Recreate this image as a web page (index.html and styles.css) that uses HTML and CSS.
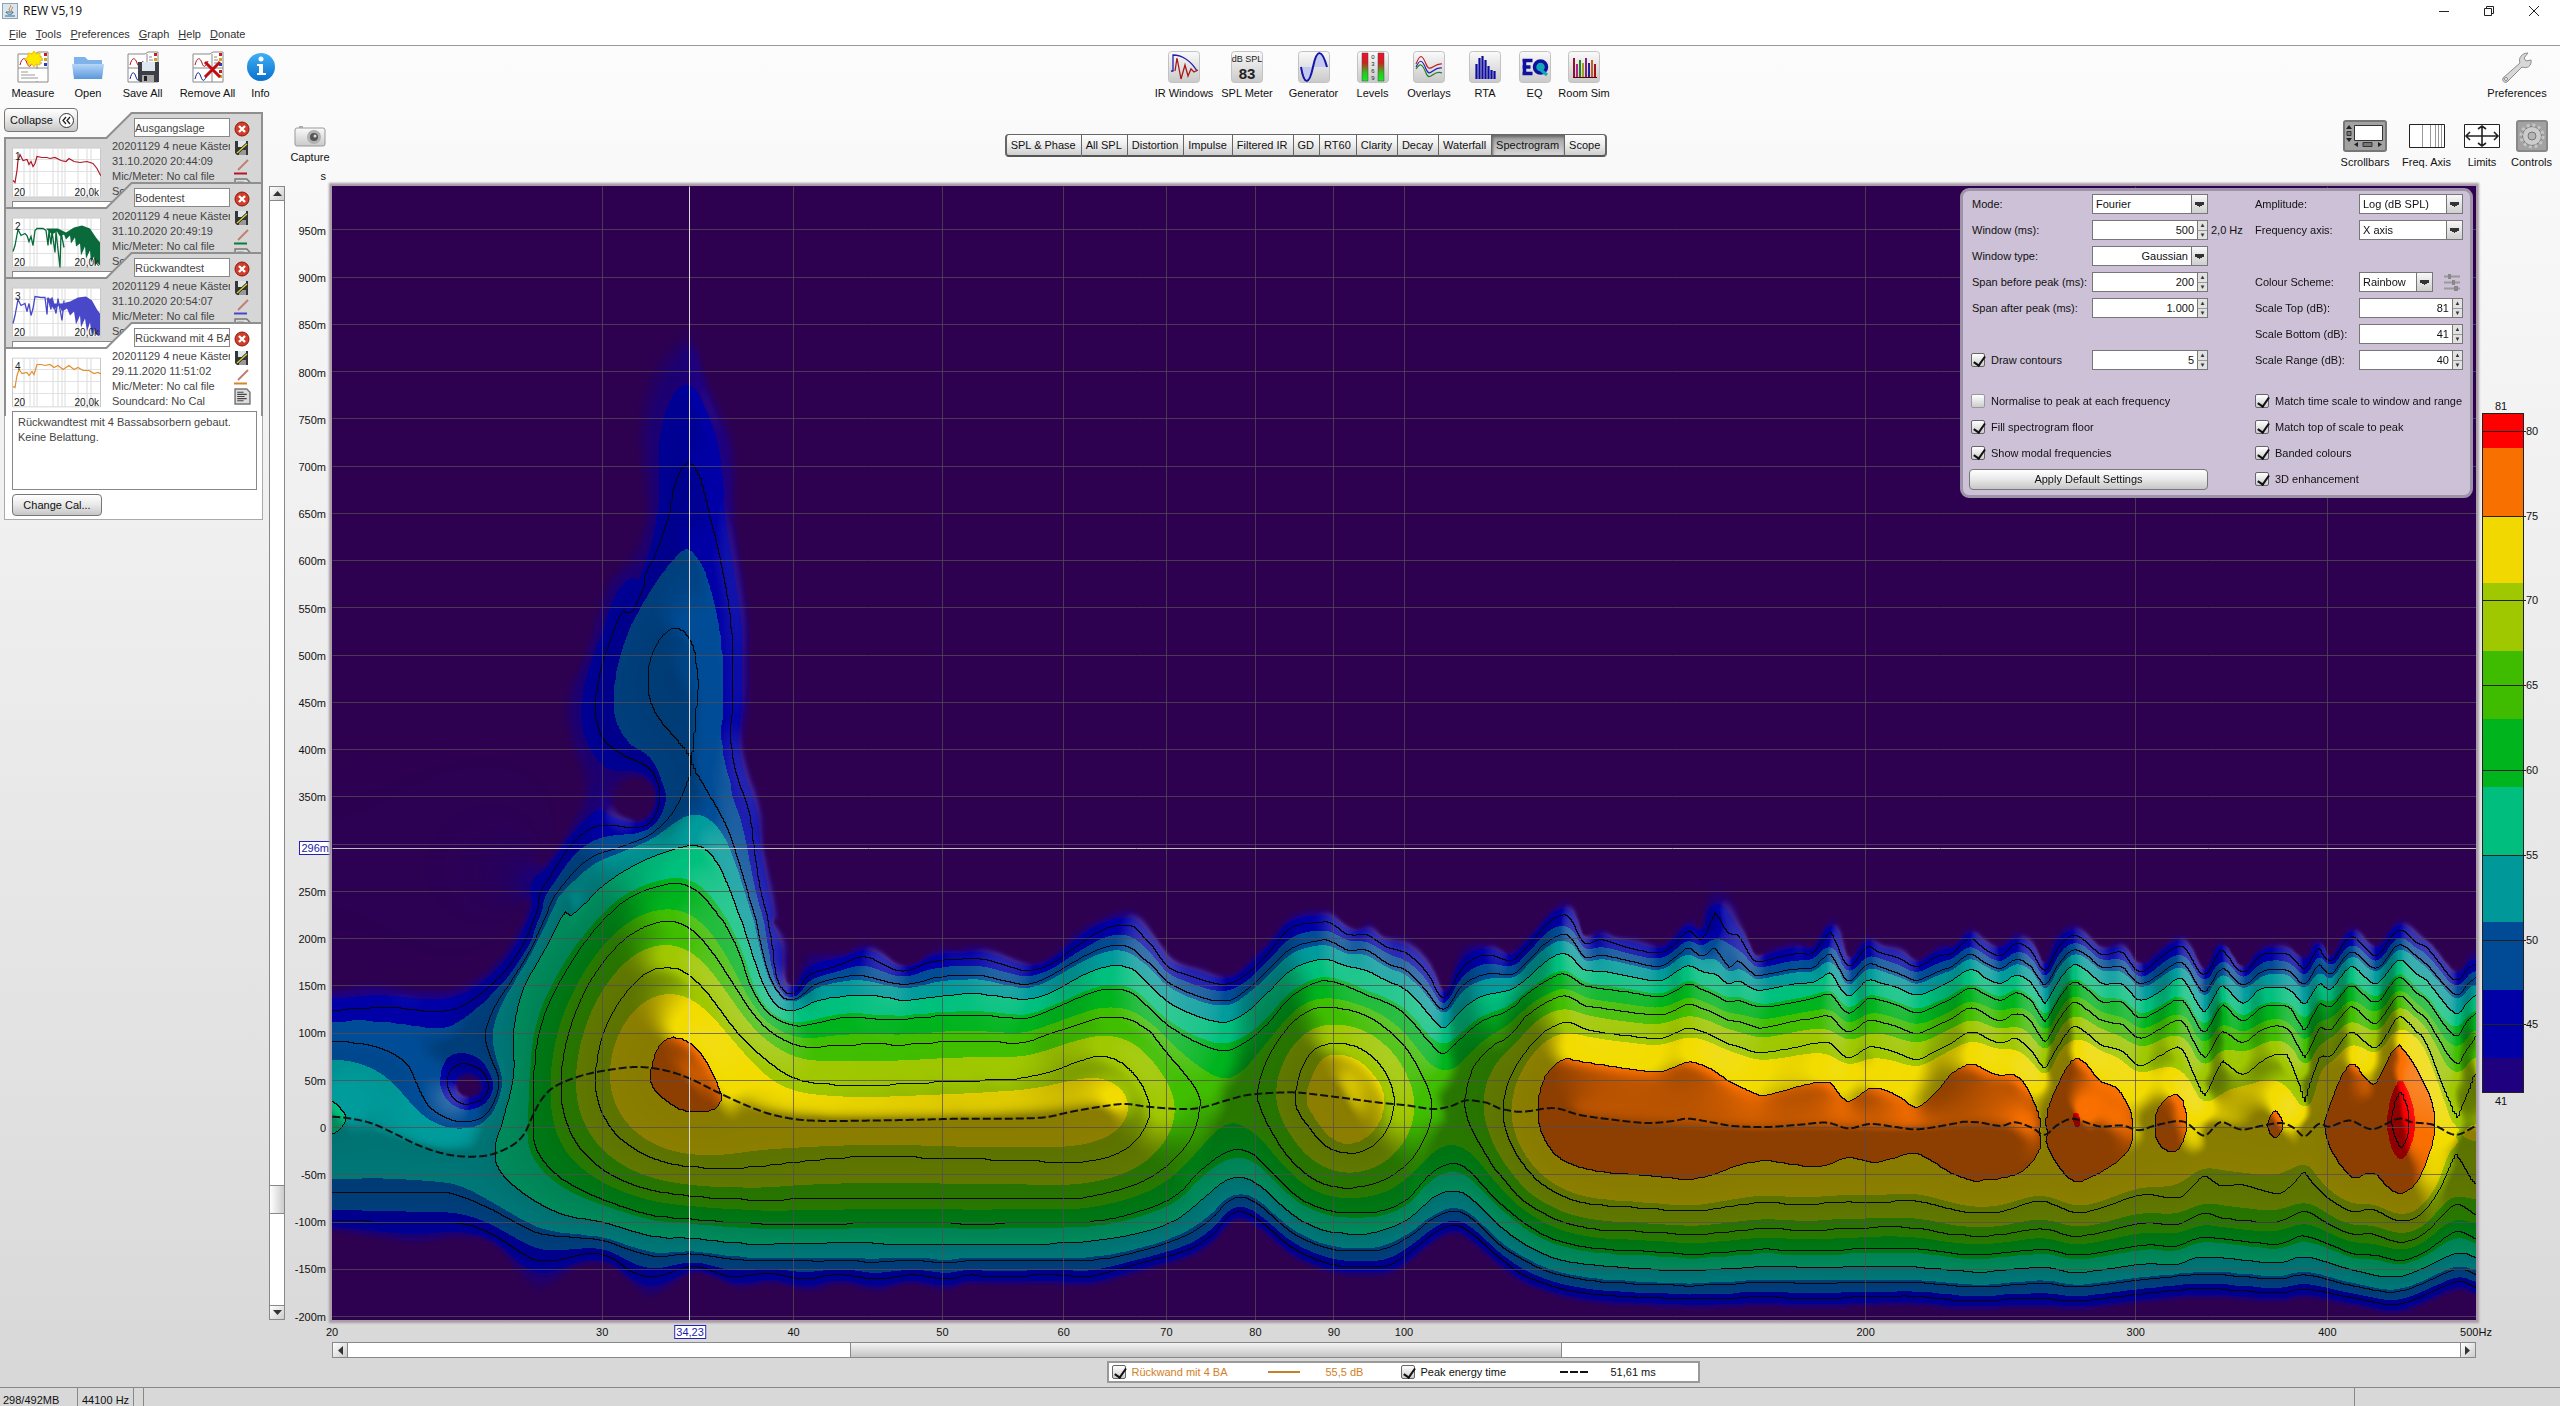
FILE: index.html
```html
<!DOCTYPE html>
<html lang="en">
<head>
<meta charset="utf-8">
<title>REW V5,19</title>
<link rel="stylesheet" href="styles.css">
</head>
<body>
<svg class="defs" width="0" height="0" aria-hidden="true">
  <defs>
    <linearGradient id="g-face" x1="0" y1="0" x2="0" y2="1"><stop offset="0" stop-color="#fafafa"/><stop offset="1" stop-color="#c9c9c9"/></linearGradient>
    <linearGradient id="g-folder" x1="0" y1="0" x2="0" y2="1"><stop offset="0" stop-color="#b6d6f7"/><stop offset="1" stop-color="#5b97dc"/></linearGradient>
    <linearGradient id="g-info" x1="0" y1="0" x2="0" y2="1"><stop offset="0" stop-color="#3fb0f5"/><stop offset="1" stop-color="#0a70cc"/></linearGradient>
    <linearGradient id="g-level" x1="0" y1="0" x2="0" y2="1"><stop offset="0" stop-color="#f01030"/><stop offset=".35" stop-color="#d02020"/><stop offset=".7" stop-color="#30c020"/><stop offset="1" stop-color="#10f020"/></linearGradient>
    <symbol id="i-sheet" viewBox="0 0 32 32">
      <path d="M1 3h17l3-2h10v30H1z" fill="#fff" stroke="#8a8a8a"/>
      <path d="M1 17h30M20 3v28" stroke="#8a8a8a" fill="none"/>
      <path d="M3 14c2-8 5-8 7-2s4 3 6-2" stroke="#b01020" fill="none"/>
      <path d="M27 2h3v3h-3zM27 19h3v3h-3z" fill="#c02020"/><path d="M27 7h3v3h-3zM27 24h3v3h-3z" fill="#d8a020"/><path d="M27 12h3v3h-3z" fill="#2040c0"/>
      <path d="M22 6h3M22 9h4M22 12h3" stroke="#888"/>
    </symbol>
    <symbol id="i-close" viewBox="0 0 16 16"><circle cx="8" cy="8" r="7" fill="#d33c28" stroke="#8a1a12"/><path d="M5 5l6 6M11 5l-6 6" stroke="#fff" stroke-width="2.4"/></symbol>
    <symbol id="i-save" viewBox="0 0 16 16"><path d="M1 1h13v14H3l-2-2z" fill="#33363a"/><path d="M4 1h8v6H4z" fill="#dfe6ea"/><path d="M5 10h7v5H5z" fill="#999"/><path d="M3 13L13 4" stroke="#222" stroke-width="3"/><path d="M3 13L13 4" stroke="#d8cf3a" stroke-width="1.500"/></symbol>
    <symbol id="i-note" viewBox="0 0 16 16"><path d="M1 1h11l3 3v11H1z" fill="#ddd" stroke="#777" stroke-width="1.4"/><path d="M3 4h6M3 6h9M3 8h7M3 10h9M3 12h6" stroke="#444"/></symbol>
    <symbol id="i-thumbgrid" viewBox="0 0 89 50"><path d="M.5.5h88v49H.5z" fill="#fff" stroke="#c8c8c8"/><path d="M1 12h87M1 24h87M1 36h87" stroke="#e2e2e2"/><path d="M12 1v48M18 1v48M22 1v48M25 1v48M41 1v48M46 1v48M50 1v48M53 1v48M66 1v48M75 1v48M79 1v48" stroke="#dcdcdc"/></symbol>
    <symbol id="i-cardbg" viewBox="0 0 258 95" preserveAspectRatio="none"><path d="M1 96V26h101L127 1h130v95z" fill="inherit" stroke="#8f8f8f" stroke-width="2" vector-effect="non-scaling-stroke"/></symbol>
  </defs>
</svg>

<header class="titlebar">
  <svg class="appicon" width="16" height="16" viewBox="0 0 16 16"><rect x=".5" y=".5" width="15" height="15" fill="#d9e6ee" stroke="#8ba3b4"/><path d="M8 2c3 2-3 3 0 6M10 4c2 1-2 2 0 4" stroke="#d8702a" fill="none"/><path d="M4 9h7c0 3-6 3-7 0M3 13h10" stroke="#37688c" fill="none"/></svg>
  <h1>REW V5,19</h1>
  <div class="winbtns">
    <button aria-label="Minimise"><svg width="10" height="10"><path d="M0 5.5h10" stroke="#222"/></svg></button>
    <button aria-label="Restore"><svg width="10" height="10"><path d="M.5 2.5h7v7h-7zM2.500 2.500v-2h7v7h-2" stroke="#222" fill="none"/></svg></button>
    <button aria-label="Close"><svg width="10" height="10"><path d="M0 0l10 10M10 0L0 10" stroke="#222"/></svg></button>
  </div>
</header>
<nav class="menubar">
  <a href="#"><u>F</u>ile</a><a href="#"><u>T</u>ools</a><a href="#"><u>P</u>references</a><a href="#"><u>G</u>raph</a><a href="#"><u>H</u>elp</a><a href="#"><u>D</u>onate</a>
</nav>

<div class="toolbar">
  <div class="group">
    <button class="tool w66"><svg width="32" height="32"><use href="#i-sheet"/><path d="M2 18h28v12H2z" fill="#fff"/><path d="M4 21h7M4 24h14M4 27h17" stroke="#999"/><path d="M17 0l2 3 4-1 0 4 3 2-3 2 0 4-4-1-2 3-2-3-4 1 0-4-3-2 3-2 0-4 4 1z" fill="#ffe800" stroke="#f0c000"/></svg>Measure</button>
    <button class="tool w44"><svg width="32" height="32"><path d="M2 6h11l3 3h14v16H2z" fill="#7fb1ea"/><path d="M0 13h32l-2 15H2z" fill="url(#g-folder)"/></svg>Open</button>
    <button class="tool w65"><svg width="32" height="32"><use href="#i-sheet"/><path d="M3 28c2-8 4-8 6-2s4 3 6-2" stroke="#1020a0" fill="none"/><path d="M11 11h21v20H13l-2-2z" fill="#3c4046"/><path d="M15 11h13v9H15z" fill="#dfe8f2"/><path d="M15 24h12v7H15z" fill="#aaa"/><path d="M17 25h3v5h-3z" fill="#222"/></svg>Save All</button>
    <button class="tool w65"><svg width="32" height="32"><use href="#i-sheet"/><path d="M3 28c2-8 4-8 6-2s4 3 6-2" stroke="#1020a0" fill="none"/><path d="M13 11l15 15M28 11L13 26" stroke="#c00c10" stroke-width="3"/></svg>Remove All</button>
    <button class="tool w41"><svg width="32" height="32"><circle cx="16" cy="16" r="14" fill="url(#g-info)"/><circle cx="16" cy="8" r="2.500" fill="#fff"/><path d="M12 13h6v9h3v2H12v-2h2v-7h-2z" fill="#fff"/></svg>Info</button>
  </div>
  <div class="group">
    <button class="tool w62"><svg width="32" height="32"><rect class="face" x=".5" y=".5" width="31" height="31" rx="3"/><path d="M3 20h2V4c9 0 18 6 24 16" stroke="#2020b0" stroke-width="1.300" fill="none"/><path d="M7 20l2-13 4 21 4-14 3 11 3-7 3 3 4-2" stroke="#a81818" stroke-width="1.300" fill="none"/></svg>IR Windows</button>
    <button class="tool w64"><svg width="32" height="32"><rect class="face" x=".5" y=".5" width="31" height="31" rx="3"/><text x="16" y="11" class="t-small">dB SPL</text><text x="16" y="28" class="t-big">83</text></svg>SPL Meter</button>
    <button class="tool w69"><svg width="32" height="32"><rect class="face" x=".5" y=".5" width="31" height="31" rx="3"/><path d="M3 16h11c-3 18-8 18-11 0M14 16c4-18 9-18 15 0z" fill="#c3c8ee"/><path d="M3 16c3 18 8 19 12 0s9-18 14 0" stroke="#1414a8" stroke-width="2" fill="none"/></svg>Generator</button>
    <button class="tool w49"><svg width="32" height="32"><rect class="face" x=".5" y=".5" width="31" height="31" rx="3"/><path d="M5 2h6v28H5zM21 2h6v28h-6z" fill="url(#g-level)" stroke="#444" stroke-width=".5"/><text x="16" y="8" class="t-tiny">0</text><text x="16" y="15" class="t-tiny">3</text><text x="16" y="22" class="t-tiny">6</text><text x="16" y="29" class="t-tiny">9</text></svg>Levels</button>
    <button class="tool w64"><svg width="32" height="32"><rect class="face" x=".5" y=".5" width="31" height="31" rx="3"/><g fill="none" stroke-width="1.200"><path d="M3 13c4-10 6-10 10 0s7-1 16 0" stroke="#c02020"/><path d="M3 16c4-8 6-8 10 2s7-3 16-1" stroke="#2020c0"/><path d="M3 18c4-6 6-6 10 4s7-4 16 0" stroke="#208020"/></g></svg>Overlays</button>
    <button class="tool w48"><svg width="32" height="32"><rect class="face" x=".5" y=".5" width="31" height="31" rx="3"/><path d="M7.500 28V13M10.500 28V7M13.500 28V5M16.500 28V9M19.500 28V15M22.500 28v-9M25.500 28v-8" stroke="#0c0ca0" stroke-width="2.200"/></svg>RTA</button>
    <button class="tool w51"><svg width="32" height="32"><rect class="face" x=".5" y=".5" width="31" height="31" rx="3"/><path d="M3.500 9.500h10M3.500 16h8M3.500 22.500h10M5.500 8v16" stroke="#1010a0" stroke-width="3.500" fill="none"/><circle cx="21.500" cy="16" r="6" fill="#10a8b8" stroke="#1010a0" stroke-width="3.500"/><path d="M22 19l6 5" stroke="#10a8b8" stroke-width="3" fill="none"/></svg>EQ</button>
    <button class="tool w48"><svg width="32" height="32"><rect class="face" x=".5" y=".5" width="31" height="31" rx="3"/><g stroke-width="2"><path d="M6 26V7" stroke="#901030"/><path d="M9 26V13" stroke="#b02090"/><path d="M12 26V9" stroke="#208020"/><path d="M15 26V12" stroke="#a0a020"/><path d="M18 26V7" stroke="#802080"/><path d="M21 26V12" stroke="#2020a0"/><path d="M24 26V9" stroke="#c06020"/><path d="M27 26V13" stroke="#a01020"/></g><path d="M5 26.500h24" stroke="#600"/></svg>Room Sim</button>
  </div>
  <div class="group prefs">
    <button class="tool"><svg width="32" height="32"><path d="M2 27L19 12c-2-5 2-10 8-10l-4 5 2 3 5-1c1 6-4 9-9 7L6 31c-3 1-5-1-4-4z" fill="#d8d8d8" stroke="#8c8c8c"/><circle cx="5" cy="28" r="1.500" fill="#fff" stroke="#888"/></svg>Preferences</button>
  </div>
</div>

<div class="work">
  <aside class="sidebar">
    <button class="btn collapse">Collapse <svg width="17" height="17"><circle cx="8.500" cy="8.500" r="7" fill="#fff" stroke="#333"/><path d="M8 5L5 8.500 8 12M12 5L9 8.500l3 3.500" stroke="#222" fill="none" stroke-width="1.300"/></svg></button>
    <div class="cards">
      <article class="card">
        <svg class="cardbg"><use href="#i-cardbg"/></svg>
        <svg class="thumb" width="89" height="51" viewBox="0 0 89 50"><use href="#i-thumbgrid"/><path d="M1 33l2 2 2-12 1-10 2-6 3 6 4-1 2 5 2-3 2 5 2-3 2-7 5 1 5 0 3 1 5-1 6 3 5 1 3-3 5 3 6 1 7-1 6 2 4 5 3 6 2 2 2-4 1-4" stroke="#b01828" stroke-width="1.200" fill="none"/><text x="3" y="12">1</text><text x="2" y="48">20</text><text x="87" y="48" class="end">20,0k</text></svg>
        <div class="info"><input type="text" value="Ausgangslage" aria-label="Measurement name"><p>20201129 4 neue Kästen</p><p>31.10.2020 20:44:09</p><p>Mic/Meter: No cal file</p><p>Soundcard: No Cal</p></div>
        <div class="acts"><button aria-label="Remove"><svg width="16" height="16"><use href="#i-close"/></svg></button><button aria-label="Save"><svg width="16" height="16"><use href="#i-save"/></svg></button><button aria-label="Trace colour"><svg width="16" height="16"><path d="M4 11L14 1" stroke="#c08070" stroke-width="2"/><path d="M0 14.500h13" stroke="#b01828" stroke-width="2"/></svg></button><button aria-label="Notes"><svg width="17" height="17"><use href="#i-note"/></svg></button></div>
        <textarea aria-label="Notes"></textarea>
      </article>
      <article class="card">
        <svg class="cardbg"><use href="#i-cardbg"/></svg>
        <svg class="thumb" width="89" height="51" viewBox="0 0 89 50"><use href="#i-thumbgrid"/><path d="M1 34l2-6 3-16 3 6 4-2 2 2 2 6 2-5 2 9 2-15 2-2 6 0 3 2 2 15 1-15 2 14 1-13 3 21 1-21 4 36 1-35 3 15" stroke="#0a6a3c" stroke-width="1.300" fill="none"/><path d="M34 11h12l8 4 8-5 8-2 8 3 6 9 4 5v23l-3-3-2 3-1-9-3 6-1-12-4 8-1-12-4 9-1-12-4 3-1-9-4 6-1-8-4 4-2-5-4 2-3-5-5 3z" fill="#0a6a3c"/><text x="3" y="12">2</text><text x="2" y="48">20</text><text x="87" y="48" class="end">20,0k</text></svg>
        <div class="info"><input type="text" value="Bodentest" aria-label="Measurement name"><p>20201129 4 neue Kästen</p><p>31.10.2020 20:49:19</p><p>Mic/Meter: No cal file</p><p>Soundcard: No Cal</p></div>
        <div class="acts"><button aria-label="Remove"><svg width="16" height="16"><use href="#i-close"/></svg></button><button aria-label="Save"><svg width="16" height="16"><use href="#i-save"/></svg></button><button aria-label="Trace colour"><svg width="16" height="16"><path d="M4 11L14 1" stroke="#c08070" stroke-width="2"/><path d="M0 14.500h13" stroke="#0a7a44" stroke-width="2"/></svg></button><button aria-label="Notes"><svg width="17" height="17"><use href="#i-note"/></svg></button></div>
        <textarea aria-label="Notes"></textarea>
      </article>
      <article class="card">
        <svg class="cardbg"><use href="#i-cardbg"/></svg>
        <svg class="thumb" width="89" height="51" viewBox="0 0 89 50"><use href="#i-thumbgrid"/><path d="M1 36l2-8 3-16 3 6 4-2 2 8 2-8 2 12 2-7 2-12 6 1 4 0 2 17 1-17 3 12 1-12 4 16 2-15 4 22 2-20" stroke="#4848c8" stroke-width="1.300" fill="none"/><path d="M34 11h6l2 5 8 0 8-2 8-4 8-1 6 4 5 9 3 4v22l-4-1-2-6-2 8-2-14-3 9-2-13-4 9-1-12-4 9-2-13-4 4-3-7-5 3-3-6-5 4z" fill="#4848c8"/><text x="3" y="12">3</text><text x="2" y="48">20</text><text x="87" y="48" class="end">20,0k</text></svg>
        <div class="info"><input type="text" value="Rückwandtest" aria-label="Measurement name"><p>20201129 4 neue Kästen</p><p>31.10.2020 20:54:07</p><p>Mic/Meter: No cal file</p><p>Soundcard: No Cal</p></div>
        <div class="acts"><button aria-label="Remove"><svg width="16" height="16"><use href="#i-close"/></svg></button><button aria-label="Save"><svg width="16" height="16"><use href="#i-save"/></svg></button><button aria-label="Trace colour"><svg width="16" height="16"><path d="M4 11L14 1" stroke="#c08070" stroke-width="2"/><path d="M0 14.500h13" stroke="#4848c8" stroke-width="2"/></svg></button><button aria-label="Notes"><svg width="17" height="17"><use href="#i-note"/></svg></button></div>
        <textarea aria-label="Notes"></textarea>
      </article>
      <article class="card current">
        <svg class="cardbg"><use href="#i-cardbg"/></svg>
        <svg class="thumb" width="89" height="51" viewBox="0 0 89 50"><use href="#i-thumbgrid"/><path d="M1 29l2 1 2-12 2-6 3 4 5-1 2 3 3-4 2 3 3-10 4 0 4 1 5-1 4 3 4-2 5 4 6-4 5 4 4-2 5 3 6 0 5 3 4-1 4 2 3 4 2 2" stroke="#e09030" stroke-width="1.200" fill="none"/><text x="3" y="12">4</text><text x="2" y="48">20</text><text x="87" y="48" class="end">20,0k</text></svg>
        <div class="info"><input type="text" value="Rückwand mit 4 BA" aria-label="Measurement name"><p>20201129 4 neue Kästen</p><p>29.11.2020 11:51:02</p><p>Mic/Meter: No cal file</p><p>Soundcard: No Cal</p></div>
        <div class="acts"><button aria-label="Remove"><svg width="16" height="16"><use href="#i-close"/></svg></button><button aria-label="Save"><svg width="16" height="16"><use href="#i-save"/></svg></button><button aria-label="Trace colour"><svg width="16" height="16"><path d="M4 11L14 1" stroke="#c08070" stroke-width="2"/><path d="M0 14.500h13" stroke="#d08828" stroke-width="2"/></svg></button><button aria-label="Notes"><svg width="17" height="17"><use href="#i-note"/></svg></button></div>
        <textarea aria-label="Notes">Rückwandtest mit 4 Bassabsorbern gebaut.
Keine Belattung.</textarea>
        <button class="btn cal">Change Cal...</button>
      </article>
    </div>
  </aside>

  <main class="graph">
    <div class="graphhead">
      <button class="tool capture"><svg width="32" height="24"><rect x="1" y="4" width="30" height="18" rx="2" fill="url(#g-face)" stroke="#999"/><path d="M5 2h4v2H5z" fill="#aaa"/><circle cx="20" cy="13" r="7" fill="#b0b0b0"/><circle cx="20" cy="13" r="4" fill="#555"/><circle cx="21" cy="12" r="1.500" fill="#ddd"/></svg>Capture</button>
      <div class="tabs" role="tablist">
        <button>SPL &amp; Phase</button><button>All SPL</button><button>Distortion</button><button>Impulse</button><button>Filtered IR</button><button>GD</button><button>RT60</button><button>Clarity</button><button>Decay</button><button>Waterfall</button><button class="on">Spectrogram</button><button>Scope</button>
      </div>
      <div class="group views">
        <button class="tool w58"><svg width="44" height="32"><rect x="1" y="1" width="42" height="30" rx="2" fill="#a2a2a2" stroke="#777" stroke-width="2"/><path d="M11.500 5.500h28v15h-28z" fill="#fff" stroke="#333"/><path d="M3 9l3-4 3 4zM3 18l3 4 3-4zM15 22v5l-4-2.500zM35 22v5l4-2.500z" fill="#222"/><path d="M4 11.500h4v4H4zM20 22.500h9v4h-9z" fill="#777" stroke="#333"/></svg>Scrollbars</button>
        <button class="tool w65"><svg width="36" height="32"><path d="M.5 4.500h35v23H.5z" fill="#fff" stroke="#222"/><path d="M13.500 5v22M21.500 5v22M26.500 5v22M29.500 5v22M32.500 5v22" stroke="#999"/></svg>Freq. Axis</button>
        <button class="tool w46"><svg width="36" height="32"><path d="M.5 4.500h35v23H.5z" fill="#fff" stroke="#222"/><path d="M2 16h32M18 6v20M6 12l-4 4 4 4M30 12l4 4-4 4M14 9l4-3 4 3M14 23l4 3 4-3" stroke="#222" stroke-width="1.600" fill="none"/></svg>Limits</button>
        <button class="tool w53"><svg width="32" height="32"><rect x="1" y="1" width="30" height="30" rx="2" fill="#a2a2a2" stroke="#888" stroke-width="2"/><circle cx="16" cy="16" r="9.500" fill="#ccc" stroke="#777"/><circle cx="16" cy="16" r="11" fill="none" stroke="#c4c4c4" stroke-width="3" stroke-dasharray="3 2.760"/><circle cx="16" cy="16" r="4" fill="#b4b4b4" stroke="#777"/></svg>Controls</button>
      </div>
    </div>
    <span class="unit">s</span>

    <div class="scroll vert" role="scrollbar" aria-controls="spectrogram" aria-valuenow="12" aria-label="Time">
      <button aria-label="Up"><svg width="9" height="5"><path d="M0 5l4.500-5L9 5z" fill="#333"/></svg></button><i class="gap-a"></i><i class="thumbbar"></i><i class="gap-b"></i><button aria-label="Down"><svg width="9" height="5"><path d="M0 0l4.500 5L9 0z" fill="#333"/></svg></button>
    </div>
    <div class="ylabels"><span>950m</span><span>900m</span><span>850m</span><span>800m</span><span>750m</span><span>700m</span><span>650m</span><span>600m</span><span>550m</span><span>500m</span><span>450m</span><span>400m</span><span>350m</span><span class="under">&nbsp;<span class="cursor-y">296m</span></span><span>250m</span><span>200m</span><span>150m</span><span>100m</span><span>50m</span><span>0</span><span>-50m</span><span>-100m</span><span>-150m</span><span>-200m</span></div>

    <section class="plot">
      <canvas id="spectrogram" width="2144" height="1134"></canvas>
      <form class="panel">
        <div class="col a">
          <div class="row"><label for="mode">Mode:</label><select id="mode"><option>Fourier</option></select></div>
          <div class="row"><label for="win">Window (ms):</label><span class="spin"><input id="win" type="text" value="500"><button type="button" aria-label="More">▲</button><button type="button" aria-label="Less">▼</button></span><span class="hz">2,0 Hz</span></div>
          <div class="row"><label for="wtype">Window type:</label><select id="wtype" class="r"><option>Gaussian</option></select></div>
          <div class="row"><label for="before">Span before peak (ms):</label><span class="spin"><input id="before" type="text" value="200"><button type="button" aria-label="More">▲</button><button type="button" aria-label="Less">▼</button></span></div>
          <div class="row"><label for="after">Span after peak (ms):</label><span class="spin"><input id="after" type="text" value="1.000"><button type="button" aria-label="More">▲</button><button type="button" aria-label="Less">▼</button></span></div>
          <div class="row"></div>
          <div class="row"><label class="ck"><input type="checkbox" checked>Draw contours</label><span class="spin"><input aria-label="Contour step" type="text" value="5"><button type="button" aria-label="More">▲</button><button type="button" aria-label="Less">▼</button></span></div>
          <div class="row top"><label class="ck"><input type="checkbox">Normalise to peak at each frequency</label></div>
          <div class="row"><label class="ck"><input type="checkbox" checked>Fill spectrogram floor</label></div>
          <div class="row"><label class="ck"><input type="checkbox" checked>Show modal frequencies</label></div>
          <div class="row"><button type="button" class="btn apply">Apply Default Settings</button></div>
        </div>
        <div class="col b">
          <div class="row"><label for="amp">Amplitude:</label><select id="amp"><option>Log (dB SPL)</option></select></div>
          <div class="row"><label for="fax">Frequency axis:</label><select id="fax"><option>X axis</option></select></div>
          <div class="row"></div>
          <div class="row"><label for="scheme">Colour Scheme:</label><select id="scheme" class="short"><option>Rainbow</option></select><svg class="sliders" width="16" height="18"><path d="M0 3.500h16M0 9.500h16M0 15.500h16" stroke="#999" stroke-width="2"/><path d="M4 1h3v5H4zM8 7h3v5H8zM10 13h4v5h-4z" fill="#888"/></svg></div>
          <div class="row"><label for="top">Scale Top (dB):</label><span class="spin"><input id="top" type="text" value="81"><button type="button" aria-label="More">▲</button><button type="button" aria-label="Less">▼</button></span></div>
          <div class="row"><label for="bot">Scale Bottom (dB):</label><span class="spin"><input id="bot" type="text" value="41"><button type="button" aria-label="More">▲</button><button type="button" aria-label="Less">▼</button></span></div>
          <div class="row"><label for="rng">Scale Range (dB):</label><span class="spin"><input id="rng" type="text" value="40"><button type="button" aria-label="More">▲</button><button type="button" aria-label="Less">▼</button></span></div>
          <div class="row top"><label class="ck"><input type="checkbox" checked>Match time scale to window and range</label></div>
          <div class="row"><label class="ck"><input type="checkbox" checked>Match top of scale to peak</label></div>
          <div class="row"><label class="ck"><input type="checkbox" checked>Banded colours</label></div>
          <div class="row"><label class="ck"><input type="checkbox" checked>3D enhancement</label></div>
        </div>
      </form>
    </section>

    <div class="scale">
      <div class="bar"><b>81</b>
        <span style="top:2.5%">80</span><span style="top:15%">75</span><span style="top:27.5%">70</span><span style="top:40%">65</span><span style="top:52.5%">60</span><span style="top:65%">55</span><span style="top:77.5%">50</span><span style="top:90%">45</span>
        <b class="min">41</b></div>
    </div>

    <div class="xlabels">
      <span style="left:0%">20</span><span style="left:12.6%">30</span><span class="cursor-x" style="left:16.7%">34,23</span><span style="left:21.53%">40</span><span style="left:28.47%">50</span><span style="left:34.13%">60</span><span style="left:38.92%">70</span><span style="left:43.07%">80</span><span style="left:46.73%">90</span><span style="left:50%">100</span><span style="left:71.53%">200</span><span style="left:84.13%">300</span><span style="left:93.07%">400</span><span style="left:100%">500Hz</span>
    </div>
    <div class="scroll horiz" role="scrollbar" aria-controls="spectrogram" aria-valuenow="30" aria-label="Frequency">
      <button aria-label="Left"><svg width="5" height="9"><path d="M5 0L0 4.500 5 9z" fill="#333"/></svg></button><i class="gap-a"></i><i class="thumbbar"></i><i class="gap-b"></i><button aria-label="Right"><svg width="5" height="9"><path d="M0 0l5 4.500L0 9z" fill="#333"/></svg></button>
    </div>
    <div class="legend">
      <label class="ck orange"><input type="checkbox" checked>Rückwand mit 4 BA</label><i class="line"></i><span class="orange val">55,5 dB</span>
      <label class="ck second"><input type="checkbox" checked>Peak energy time</label><i class="line dash"></i><span>51,61 ms</span>
    </div>
  </main>
</div>
<footer class="status"><span class="mem">298/492MB</span><span class="rate">44100 Hz</span><span class="blank"></span><span class="fill"></span><span class="last"></span></footer>
<script src="script.js"></script>
</body>
</html>
```
FILE: styles.css
```css
* { box-sizing: border-box; }
body {
  margin: 0;
  min-height: 100vh;
  display: flex;
  flex-direction: column;
  font: 11px/14px "Liberation Sans", Arial, sans-serif;
  color: #111;
  background: linear-gradient(#fff 0, #fcfcfc 46px, #fafafa 130px, #e2e2e2 75%, #d7d7d7 100%);
}
button, input, select, textarea { font: inherit; color: inherit; margin: 0; }
button { background: none; border: 0; padding: 0; white-space: nowrap; }
p, h1 { margin: 0; }
svg { display: block; flex: none; }
.defs { position: absolute; }

.titlebar { display: flex; align-items: center; height: 22px; padding-left: 2px; background: #fff; }
.titlebar h1 { flex: 1; margin-left: 5px; font: 12px/16px "Open Sans", "Noto Sans", sans-serif; }
.winbtns { display: flex; margin-right: 4px; }
.winbtns button { width: 45px; height: 20px; display: flex; align-items: center; justify-content: center; }
.menubar { display: flex; gap: 9px; height: 24px; padding: 5px 9px; background: #fff; border-bottom: 1px solid #999; }
.menubar a { color: #333; text-decoration: none; }

.toolbar { display: flex; justify-content: space-between; height: 60px; padding-top: 5px; }
.group { display: flex; }
.prefs { width: 80px; justify-content: center; padding-right: 6px; }
.tool { display: flex; flex-direction: column; align-items: center; gap: 3px; align-self: flex-start; }
.w41 { width: 41px; } .w44 { width: 44px; } .w46 { width: 46px; } .w48 { width: 48px; }
.w49 { width: 49px; } .w51 { width: 51px; } .w53 { width: 53px; } .w58 { width: 58px; }
.w62 { width: 62px; } .w64 { width: 64px; } .w65 { width: 65px; } .w66 { width: 66px; } .w69 { width: 69px; }
.face { fill: url(#g-face); stroke: #c2c2c2; }
.tool text { text-anchor: middle; fill: #222; }
.t-small { font-size: 9px; }
.t-big { font-size: 15px; font-weight: bold; }
.t-tiny { font-size: 6px; }

.btn { border: 1px solid #777; border-radius: 4px; background: linear-gradient(#fff, #e8e8e8 50%, #c6c6c6); color: #111; }

.work { flex: 1; display: grid; grid-template-columns: 264px 1fr; }
.sidebar { padding: 2px 0 0 4px; }
.collapse { display: flex; align-items: center; gap: 5px; width: 74px; height: 24px; padding-left: 5px; }
.cards { width: 259px; margin-top: -20px; }
.card {
  position: relative;
  display: grid;
  grid-template-columns: 100px 1fr 33px;
  grid-template-rows: 88px 1fr;
  height: 95px;
  margin-bottom: -25px;
  padding: 1px 0 0 8px;
  overflow: hidden;
  fill: #d6d6d6;
  color: #444;
  pointer-events: none;
}
.card.current { height: auto; grid-template-rows: 88px 80px 29px; fill: #fff; margin-bottom: 0; }
.cardbg { position: absolute; inset: 0; width: 100%; height: 95px; }
.card > :not(.cardbg) { position: relative; pointer-events: auto; }
.card.current::after { content: ""; position: absolute; inset: 94px 0 0 0; border: 1px solid #aaa; border-top: 0; background: #fff; }
.card.current > textarea, .card.current > .cal { z-index: 1; }
.thumb { margin-top: 34px; }
.thumb text { font-size: 10px; fill: #222; }
.thumb .end { text-anchor: end; }
.info { padding-top: 5px; }
.info input { display: block; width: 96px; height: 19px; margin: 0 0 2px 22px; padding: 0; border: 1px solid #888; background: #fff; }
.info p { height: 15px; width: 118px; overflow: hidden; white-space: nowrap; }
.acts { display: flex; flex-direction: column; align-items: flex-start; gap: 3px; padding: 8px 0 0 4px; }
.card textarea { grid-column: 1 / 4; margin: 0 6px 0 0; height: 79px; border: 1px solid #888; resize: none; overflow: hidden; padding: 3px 5px; line-height: 15px; background: #fff; }
.cal { grid-column: 1 / 4; width: 90px; height: 22px; margin-top: 3px; }

.graph {
  display: grid;
  grid-template-columns: 22px 46px 1fr 84px;
  grid-template-rows: 65px 15px 1fr 22px 16px 29px;
}
.graphhead { grid-column: 1 / 5; display: flex; align-items: flex-start; padding-top: 14px; }
.capture { width: 48px; margin-left: 22px; padding-top: 4px; gap: 2px; }
.tabs { flex: 1; display: flex; justify-content: center; padding: 14px 58px 0 0; }
.tabs button {
  height: 23px; padding: 0 5px 0 4px;
  border: 1px solid #666; border-left: 0; border-bottom: 2px solid #555;
  background: linear-gradient(#fff, #efefef 45%, #cfcfcf);
}
.tabs button:first-child { border-left: 2px solid #666; border-radius: 4px 0 0 4px; }
.tabs button:last-child { border-right: 2px solid #666; border-radius: 0 4px 4px 0; }
.tabs .on { background: linear-gradient(#969696, #b4b4b4 40%, #d8d8d8); box-shadow: inset 1px 2px 3px #666; }
.views { margin-right: 2px; }
.unit { grid-column: 2; grid-row: 2; text-align: right; padding-right: 6px; margin-top: -2px; }

.scroll { display: flex; border: 1px solid #888; background: #fff; }
.scroll button { flex: none; display: flex; align-items: center; justify-content: center; background: linear-gradient(135deg, #fff, #ccc); }
.scroll i { display: block; }
.vert { grid-column: 1; grid-row: 3; width: 16px; margin-left: 5px; flex-direction: column; }
.vert button { height: 14px; border-bottom: 1px solid #888; }
.vert button:last-child { border-bottom: 0; border-top: 1px solid #888; }
.vert .gap-a { flex: 985; } .vert .gap-b { flex: 91; }
.vert .thumbbar { height: 29px; border: 1px solid #888; border-width: 1px 0; background: linear-gradient(90deg, #fff, #ccc); }
.horiz { grid-column: 3; grid-row: 5; }
.horiz button { width: 15px; border-right: 1px solid #888; }
.horiz button:last-child { border-right: 0; border-left: 1px solid #888; }
.horiz .gap-a { flex: 503; } .horiz .gap-b { flex: 899; }
.horiz .thumbbar { flex: 711; border: 1px solid #888; border-width: 0 1px; background: linear-gradient(#f4f4f4, #c4c4c4); }

.ylabels { grid-column: 2; grid-row: 3; display: flex; flex-direction: column; justify-content: space-between; align-items: flex-end; padding: 38px 6px 0 0; margin-bottom: -4px; }
.cursor-y, .cursor-x { color: #22a; border: 1px solid #22a; background: #fff; line-height: 12px; padding: 0 1px; }
.under { position: relative; }
.cursor-y { position: absolute; right: -5px; top: 3px; }
.xlabels { grid-column: 3; grid-row: 4; position: relative; }
.xlabels span { position: absolute; top: 5px; transform: translateX(-50%); }

.plot { grid-column: 3; grid-row: 3; position: relative; background: #2d0050; box-shadow: 0 0 2px 3px #a89ca6; }
.plot canvas { position: absolute; inset: 0; width: 100%; height: 100%; }
.panel {
  position: absolute; top: 2px; right: 3px; width: 513px; height: 310px;
  display: flex; gap: 5px; padding: 0 7px;
  border: 3px solid #9d94a8; border-radius: 9px; background: #cdc1d8;
}
.col.a { width: 280px; }
.col.b { width: 208px; }
.row { display: flex; align-items: center; height: 26px; white-space: nowrap; }
.row.top { margin-top: 15px; }
.row > label { flex: 1; }
.a .row > label { flex: none; width: 122px; padding-left: 2px; }
.a .row > .ck { padding-left: 1px; }
.panel select, .spin { height: 20px; border: 1px solid #777; background: #fff; border-radius: 0; }
.panel select {
  appearance: none; width: 116px; padding: 0 16px 0 3px;
  background:
    conic-gradient(from -60deg at 50% 100%, #333 120deg, #0000 0) right 3px top 7px / 9px 5px no-repeat,
    linear-gradient(#777, #777) right 15px top 0 / 1px 100% no-repeat,
    linear-gradient(#f8f8f8, #cfcfcf) right 0 top 0 / 15px 100% no-repeat,
    #fff;
}
.panel select.r { text-align: right; text-align-last: right; padding-right: 19px; }
.b select, .b .spin { width: 104px; }
.b select.short { width: 74px; }
.sliders { margin: 0 3px 0 11px; }
.spin { display: grid; grid-template: 9px 9px / 1fr 10px; width: 116px; }
.spin input { grid-row: 1 / 3; min-width: 0; width: 100%; border: 0; background: none; padding: 0 3px 0 2px; text-align: right; }
.spin button { border-left: 1px solid #777; background: #e2e2e2; font-size: 6px; line-height: 9px; color: #333; overflow: hidden; }
.spin button:last-child { border-top: 1px solid #999; line-height: 8px; }
.hz { margin-left: 3px; }
.ck { display: flex; align-items: center; gap: 6px; }
.ck input { flex: none; appearance: none; position: relative; width: 14px; height: 14px; border: 1px solid #666; border-radius: 2px; background: linear-gradient(#fff, #ccc); }
.ck input:not(:checked) { border-color: #999; }
.ck input:checked::after { content: ""; position: absolute; left: 4px; top: 0; width: 5px; height: 10px; border: solid #111; border-width: 0 2px 2px 0; transform: rotate(35deg); }
.apply { width: 239px; height: 21px; margin-left: -1px; }

.scale { grid-column: 4; grid-row: 3; position: relative; }
.bar {
  position: absolute; left: 6px; top: 20%; width: 42px; height: 60%; border: 1px solid #222;
  background: linear-gradient(#f00 5%, #f87000 5% 15%, #f0d800 15% 25%, #a0c800 25% 35%, #40bc00 35% 45%, #00b41e 45% 55%, #00bf7e 55% 65%, #009898 65% 75%, #004a96 75% 85%, #0000a6 85% 95%, #1f007f 95%);
}
.bar span { position: absolute; left: 0; width: 100%; height: 1px; background: #222; line-height: 1px; padding-left: 43px; }
.bar b { position: absolute; top: -15px; left: 12px; font-weight: normal; }
.bar .min { top: auto; bottom: -16px; left: 12px; }

.legend { grid-column: 1 / 5; grid-row: 6; justify-self: center; display: flex; align-items: center; width: 593px; height: 22px; margin: 3px 18px 0 0; padding: 0 3px; border: 2px solid #999; background: #fff; }
.orange { color: #d08028; }
.legend .ck { width: 156px; }
.legend .line { width: 32px; border-top: 2px solid #c88028; margin-right: 26px; }
.legend .val { width: 75px; }
.legend .second { width: 159px; }
.legend .line.dash { width: 28px; border: 0; height: 2px; margin-right: 23px; background: repeating-linear-gradient(90deg, #111 0 8px, #0000 8px 10px); }

.status { display: flex; height: 19px; border-top: 1px solid #888; background: #d8d8d8; line-height: 24px; }
.status span { border-right: 1px solid #888; padding-left: 3px; overflow: hidden; }
.mem { width: 78px; } .rate { width: 56px; } .blank { width: 10px; } .fill { flex: 1; } .status .last { width: 205px; border: 0; }
.status .rate { padding-left: 4px; }
```
FILE: script.js
```js
// Spectrogram: contour samples are turned into a continuous level field,
// which is then drawn as banded colours with relief shading and contour lines.
const canvas = document.getElementById('spectrogram');
const BASE_W = 2144, BASE_H = 1134, ORG_X = 332, ORG_Y = 186;

// Every sheet of samples has its own origin and scale.
const A = { x: 260, y: 900, sx: 2.24, sy: 3 };
const B = { x: 960, y: 850, sx: 2.24, sy: 3 };
const C = { x: 1500, y: 850, sx: 3, sy: 3 };
const D = { x: 1980, y: 850, sx: 2.703, sy: 2.82 };
const T = { x: 540, y: 300, sx: 3, sy: 2.529 };

// [sheet, level, points]
const lines = [
  [A, 45, '162,332 290,322 385,334 440,325 500,275 560,195 600,105 627,10'],
  [A, 47, '162,362 240,360 330,372 400,384 440,365 500,305 560,220 615,110'],
  [A, 50, '162,422 240,432 300,460 335,500 355,560 380,620 420,655 455,665 500,650 525,600 535,540 515,470 505,400 525,320 560,245 595,170 630,75 655,5'],
  [A, 47, '403,540 415,480 445,457 490,475 515,525 519,570 500,610 465,626 430,610 410,580 403,540'],
  [A, 45, '418,545 430,505 460,490 500,515 512,550 505,590 465,613 435,600 418,545'],
  [A, 48.5, '390,430 430,420 470,430'],
  [A, 40.5, '445,560 465,535 485,560 465,580 445,560'],
  [A, 53.5, '230,690 400,750 500,740'],
  [A, 56, '162,640 172,648'],
  [A, 55, '162,598 190,640 194,660 175,695 162,705'],
  [A, 41, '162,262 250,242 370,262 450,248 520,185 570,95 600,0'],
  [A, 55, '690,0 640,140 590,260 568,390 568,520 545,650 525,750 540,820 600,890 680,945 770,968 880,1010 965,1015 1090,1032 1250,1030 1568,1035'],
  [A, 60, '767,60 715,150 650,300 620,430 612,560 610,680 620,750 660,820 720,870 800,915 880,947 965,958 1080,970 1200,973 1400,971 1568,970'],
  [A, 65, '1568,420 1440,433 1380,430 1300,435 1230,440 1190,430 1140,390 1100,330 1060,250 1010,150 960,80 912,63 860,80 800,135 740,240 700,360 678,480 675,600 690,680 720,750 780,820 860,865 965,889 1120,901 1300,895 1568,897'],
  [A, 70, '1568,541 1400,553 1290,553 1210,540 1160,505 1110,450 1060,380 1010,290 960,220 912,198 860,220 810,290 770,390 752,500 755,600 785,685 840,750 910,790 1000,805 1100,803 1200,788 1300,775 1400,771 1500,775 1568,778'],
  [A, 75, '872,520 885,450 905,415 930,408 965,425 1000,480 1030,560 1036,600 1020,630 980,641 940,630 900,595 877,560 872,520'],
  [A, 76, '930,520 970,570'],
  [A, 73, '1060,620 1200,650 1400,656 1568,657'],
  [A, 60, '1038,60 1075,160 1100,260 1140,340 1195,377 1250,368 1310,352 1420,358 1490,350 1568,342'],
  [A, 55, '1079,60 1100,150 1130,260 1160,320 1200,330 1250,300 1340,285 1400,290 1440,301 1500,292 1568,282'],
  [A, 50, '1112,60 1130,180 1150,250 1175,293 1195,298 1215,280 1250,248 1340,226 1440,253 1520,230 1568,228'],
  [A, 45, '1138,60 1148,150 1155,230 1175,280 1195,285 1210,262 1230,225 1290,200 1350,168 1400,195 1440,215 1500,185 1568,178'],
  [A, 41, '1150,60 1185,120 1188,180 1180,240 1195,245 1205,200 1220,150 1300,155 1350,120 1390,140 1430,185 1470,180 1510,140 1568,140'],
  [A, 50, '162,877 390,877 450,890 520,930 590,980 640,1005 760,1020 830,1050 890,1070 965,1062 1080,1080 1250,1086 1300,1080 1370,1087 1440,1080 1530,1088 1568,1085'],
  [A, 45, '162,965 430,970 490,985 540,1020 600,1070 645,1085 740,1060 790,1075 830,1115 885,1130 970,1100 1050,1130 1140,1120 1220,1138 1290,1122 1380,1138 1460,1125 1530,1137 1568,1133'],
  [A, 41, '162,995 270,1020 350,1035 450,1015 520,1035 570,1115 620,1190 660,1155 710,1105 760,1095 800,1115 850,1185 880,1200 930,1155 970,1120 1020,1135 1070,1170 1150,1155 1230,1180 1300,1155 1380,1180 1450,1155 1530,1175 1568,1165'],

  [T, 45, '0,1500 100,1370 185,1328 290,1335 340,1310 360,1240 330,1185 250,1150 190,1110 165,1040 180,940 210,860 260,760 340,650 380,550 400,460 430,412 465,415 490,460 520,570 550,690 570,790 580,900 578,1000 575,1120 590,1200 630,1300 645,1400 660,1490 685,1568'],
  [T, 50, '20,1535 40,1510 100,1445 160,1405 230,1386 330,1350 400,1290 440,1210 447,1165 400,1110 340,1040 320,970 330,900 370,840 410,825 445,845 470,900 475,1000 465,1130 463,1170 510,1250 560,1330 600,1430 645,1560'],
  [T, 55, '88,1568 190,1480 280,1430 360,1400 450,1378 500,1390 550,1450 603,1568'],
  [T, 60, '185,1568 260,1515 340,1485 420,1475 480,1500 548,1568'],
  [T, 41, '-6,1430 56,1368 114,1270 118,1220 84,1130 62,1050 74,980 124,900 159,800 194,705 264,635 304,560 304,490 289,400 287,320 304,215 346,143 398,92 450,56 474,92 496,172 536,250 581,335 591,400 589,520 606,640 631,800 636,920 631,1020 616,1120 636,1195 671,1285 674,1370 696,1450 725,1568'],
  [T, 42.5, '270,780 320,640 345,500 340,330 380,220 420,160 450,130 470,180 500,260 550,370 562,520'],
  [T, 47, '375,1250 330,1160 265,1120 225,1060 220,980 245,880 300,770 370,680 420,632 450,628 490,670 525,770 545,880 548,1000 547,1130 575,1230'],
  [T, 43.8, '375,520 380,380 420,260 450,240 490,300 520,420 535,520'],
  [T, 41, '230,1260 260,1220 300,1210 335,1240 335,1280 300,1310 270,1305 235,1290 230,1260'],
  [T, 43, '120,1080 135,960 195,820'], [T, 43, '160,1240 180,1280 200,1300'], [T, 43, '230,1190 300,1195 348,1230'],
  [T, 38, '285,1250 285,1265'],
  [T, 50.8, '400,920 420,1000'],

  [B, 41, '0,284 60,282 150,330 200,314 260,234 320,193 380,167 410,192 440,254 480,320 540,345 600,370 650,314 690,264 740,188 820,170 860,213 890,229 915,197 950,254 1000,259 1050,320 1080,412 1095,396 1120,284 1190,272 1208,286'],
  [B, 65, '427,540 465,610 500,665 530,720 538,765 520,860 470,940 400,1000 300,1038 240,1045 0,1045'],
  [B, 70, '360,632 400,685 427,765 420,820 390,880 340,920 280,937 220,938 120,932 0,928'],
  [B, 73.2, '0,808 200,790 340,765'],
  [B, 63.3, '595,755 605,765'],
  [B, 63.3, '1082,770 1092,775'],
  [B, 65, '667,720 690,620 740,520 790,475 830,470 900,490 950,530 1000,595 1040,690 1057,770 1045,850 1010,930 950,990 870,1015 800,995 740,930 700,850 672,770 667,720'],
  [B, 70, '751,740 760,670 790,600 835,580 890,590 940,640 970,720 968,800 940,870 900,905 865,911 820,890 780,830 755,780 751,740'],
  [B, 71, '772,750 782,690 805,630 835,610 880,620 920,660 948,720 948,790 925,845 895,875 860,882 825,860 795,810 772,750'],
  [B, 72.5, '845,700 870,790'],
  [B, 65, '1206,572 1190,590 1150,650 1132,755 1145,830 1180,920 1208,975'],
  [B, 60, '0,1124 150,1120 300,1115 400,1085 480,1040 540,960 590,910 625,898 660,915 700,970 760,1045 820,1080 870,1090 940,1085 1000,1050 1050,975 1085,945 1110,940 1140,960 1180,1020 1208,1060'],
  [B, 55, '0,1183 200,1182 300,1172 400,1150 480,1112 540,1050 590,995 628,982 670,1005 740,1090 800,1135 850,1150 920,1150 1000,1110 1060,1040 1110,1022 1150,1050 1208,1130'],
  [B, 50, '0,1235 120,1234 300,1230 400,1205 500,1160 560,1110 600,1055 630,1040 670,1065 740,1145 800,1185 860,1203 940,1200 1000,1165 1060,1105 1110,1083 1150,1110 1208,1185'],
  [B, 45, '0,1275 100,1280 220,1275 290,1280 400,1240 500,1205 560,1160 600,1100 630,1085 670,1110 740,1190 800,1230 860,1250 950,1250 1000,1215 1060,1150 1110,1125 1150,1155 1208,1224'],
  [B, 41, '0,1306 150,1304 290,1309 400,1272 500,1234 560,1190 600,1129 630,1114 670,1144 740,1222 800,1259 860,1279 950,1279 1000,1247 1060,1182 1110,1154 1150,1189 1208,1256'],

  [C, 41, '0,284 30,299 90,244 160,162 203,140 225,162 250,254 300,226 350,256 400,254 480,279 520,244 575,187 598,230 610,140 640,74 704,140 726,208 764,309 810,289 890,269 935,284 970,222 1000,178 1022,222 1045,319 1080,264 1105,247 1150,277 1210,284 1250,324 1320,274 1360,279 1405,222 1440,244'],
  [C, 70, '190,514 130,545 80,600 30,680 8,775 20,850 60,930 110,990 170,1030 250,1060 400,1073 580,1084 700,1068 800,1058 900,1066 1035,1056 1120,1060 1240,1053 1320,1070 1410,1090 1440,1088'],
  [C, 75, '190,622 160,640 125,690 110,775 120,840 150,900 200,940 300,968 450,980 570,991 650,972 720,945 800,934 880,945 950,953 1000,940 1045,922 1120,938 1180,925 1240,907 1290,930 1350,970 1420,997 1440,995'],
  [C, 77, '200,800 400,825 700,845 1000,845 1250,848 1440,830'],
  [C, 65, '0,975 60,1045 130,1090 200,1120 300,1140 450,1147 580,1154 700,1145 800,1135 920,1143 1060,1135 1250,1135 1340,1152 1440,1160'],
  [C, 60, '0,1060 60,1110 130,1155 200,1180 300,1197 450,1205 580,1213 700,1205 800,1198 900,1204 1100,1198 1260,1198 1380,1213 1440,1216'],
  [C, 55, '0,1130 60,1175 130,1212 200,1235 300,1247 400,1255 560,1262 800,1251 1000,1254 1200,1250 1400,1265 1440,1267'],
  [C, 50, '0,1188 60,1225 130,1260 200,1280 300,1296 400,1302 580,1308 790,1298 920,1302 1220,1297 1350,1307 1440,1310'],
  [C, 45, '0,1225 60,1270 130,1300 200,1320 300,1335 450,1342 600,1348 780,1342 950,1346 1220,1338 1350,1350 1440,1353'],
  [C, 41, '0,1256 60,1300 130,1329 200,1349 300,1366 450,1374 600,1380 780,1373 950,1377 1220,1369 1350,1381 1440,1384'],

  [D, 41, '0,234 50,264 95,223 140,244 172,315 200,233 255,200 290,229 330,269 385,248 430,315 490,264 550,233 605,330 645,243 705,325 755,269 820,256 875,295 910,228 945,295 1005,202 1065,264 1130,187 1200,239 1285,335 1315,284 1341,259'],
  [D, 75, '0,608 50,633 95,630 130,670 155,750 163,800 150,865 110,912 50,930 0,935'],
  [D, 77, '0,780 60,785 110,785'],
  [D, 75, '180,795 195,700 230,610 260,582 290,600 325,650 370,668 400,720 413,775 405,840 370,880 310,920 265,940 230,920 200,870 183,820 180,795'],
  [D, 77, '225,790 240,780'], [D, 77, '280,780 360,780'], [D, 80, '259,740 260,780'],
  [D, 75, '471,780 480,730 505,695 530,686 550,700 559,750 555,810 535,850 515,856 490,840 475,810 471,780'],
  [D, 76.2, '510,790 525,755'],
  [D, 75, '778,775 785,745 797,730 812,745 818,775 812,800 797,817 783,800 778,775'],
  [D, 76, '798,765 798,785'],
  [D, 75, '931,760 950,700 980,620 1003,598 1025,610 1045,650 1068,667 1090,620 1110,565 1133,545 1160,580 1200,655 1225,720 1228,800 1210,870 1180,940 1135,972 1100,950 1070,912 1045,912 1010,930 980,900 945,840 932,790 931,760'],
  [D, 77, '985,780 1060,795'],
  [D, 79, '1101,770 1112,690 1135,640 1160,690 1175,770 1160,840 1137,876 1112,840 1101,770'],
  [D, 80, '1112,760 1120,700 1135,678 1152,700 1162,760 1155,820 1137,845 1120,810 1112,760'],
  [D, 81, '1135,740 1138,790'],
  [D, 74.2, '171,790 172,800'], [D, 74, '430,780 450,780'], [D, 74, '580,770 582,780'],
  [D, 72, '605,800 606,810'], [D, 74, '640,785 750,785'], [D, 74, '840,790 850,790'],
  [D, 71.2, '877,808 878,815'], [D, 74, '905,775 915,775'], [D, 70.6, '1284,803 1286,805'], [D, 72, '1330,790 1341,790'],
  [D, 70, '0,1025 60,1020 130,995 170,989 210,1005 265,1025 340,1005 440,972 530,985 570,955 605,915 650,950 710,945 800,972 840,950 876,900 900,940 950,990 1010,1022 1060,1012 1130,1047 1190,1030 1240,960 1285,853 1320,925 1341,955'],
  [D, 65, '0,1090 60,1085 170,1068 265,1090 440,1052 530,1058 605,1022 660,1040 800,1050 876,1018 950,1060 1010,1085 1060,1082 1135,1107 1200,1082 1285,998 1341,1038'],
  [D, 60, '0,1143 170,1127 265,1143 440,1115 530,1118 605,1093 800,1112 876,1088 1010,1140 1060,1140 1135,1158 1200,1135 1285,1075 1341,1103'],
  [D, 55, '0,1192 170,1177 265,1192 440,1168 530,1170 605,1147 800,1165 876,1146 1010,1185 1135,1203 1285,1137 1341,1155'],
  [D, 50, '0,1235 170,1222 265,1233 440,1212 605,1197 800,1210 876,1197 1010,1230 1135,1245 1285,1183 1341,1202'],
  [D, 45, '0,1272 160,1265 265,1272 440,1252 605,1238 800,1250 876,1238 1010,1263 1135,1280 1285,1218 1341,1238'],
  [D, 41, '0,1300 160,1293 265,1300 440,1280 605,1266 800,1278 876,1266 1010,1291 1135,1308 1285,1246 1341,1266'],
];

// Rising side as columns: x, then the height of 45, 50, 55, 60, 65, 70, 75 dB.
const columns = [
  [B, `0 328 377 430 493 572 690|50 326 377 432 495 572 690|110 350 395 443 503 577 688|150 362 403 448 505 575 680|200 345 378 430 480 550 665|260 290 330 385 445 525 635|310 245 298 355 420 503 615|350 225 283 346 415 500 625|385 225 295 355 428 508 -|405 250 320 380 450 525 -|430 285 345 410 480 545 -|465 350 395 455 525 - -|520 380 432 493 570 - -|590 403 455 517 603 - -|640 375 420 487 575 - -|690 310 358 425 520 - -|740 232 295 360 440 - -|800 219 272 328 395 - -|830 217 272 330 392 - -|870 255 302 350 410 - -|910 253 298 360 435 - -|960 295 343 395 460 - -|1000 308 360 420 495 - -|1050 375 430 490 575 - -|1083 450 480 537 613 - -|1120 360 410 480 565 - -|1160 318 378 443 520 - -|1190 315 370 430 500 - -|1208 322 372 427 492 - -`],
  [C, `0 325 372 427 492 577 - -|40 330 372 415 470 545 - -|80 290 335 385 430 495 - -|140 220 275 330 390 455 - -|190 192 250 307 368 435 514 622|220 215 270 325 385 445 518 625|255 285 325 362 408 468 537 633|300 267 315 362 415 473 546 640|380 292 330 377 425 485 556 653|475 310 350 393 440 495 566 663|520 285 325 370 425 482 550 648|565 238 290 343 400 460 532 630|605 272 322 365 418 475 543 640|645 180 290 370 435 490 560 660|685 252 358 405 457 512 582 690|715 252 328 390 450 513 588 705|765 335 378 420 468 530 607 730|790 332 375 420 473 534 608 737|890 310 355 400 455 510 590 708|935 312 358 400 445 505 580 697|965 268 325 380 435 497 575 693|995 243 310 368 430 497 578 698|1043 350 397 440 492 548 626 757|1100 288 340 388 445 510 590 715|1140 308 350 398 450 515 592 712|1200 325 372 415 468 532 610 740|1250 350 392 437 490 552 630 775|1310 318 365 413 465 525 600 720|1355 312 350 390 445 505 578 665|1405 262 310 357 412 470 543 638|1440 285 327 365 422 480 550 645`],
  [D, `0 270 310 352 398 452 518|55 300 335 378 425 485 545|95 260 305 350 400 457 528|140 285 330 375 425 482 565|175 345 385 437 488 548 622|205 285 330 380 430 490 560|250 238 280 322 370 427 495|290 260 298 340 392 450 515|330 297 332 378 430 482 552|385 287 328 375 425 490 565|430 345 378 425 475 533 612|485 305 350 400 450 505 578|548 270 315 360 420 480 558|605 355 405 462 520 590 698|652 278 330 377 432 508 590|708 345 383 435 485 545 635|755 297 345 392 445 508 596|800 290 335 385 435 495 573|840 297 342 395 445 510 585|878 340 382 440 515 592 714|915 270 315 372 430 498 582|948 315 355 395 445 510 584|1003 240 285 325 378 438 508|1070 300 335 380 433 492 562|1130 223 265 307 355 407 467|1180 262 300 350 405 455 510|1210 275 325 370 425 480 550|1285 370 410 465 530 607 757|1315 335 380 430 480 560 680|1341 318 350 398 452 512 600`],
];

const peakTime = [
  [A, '162,650 200,655 250,670 300,700 350,733 400,757 450,769 510,766 560,740 590,705 610,650 630,600 660,560 720,527 790,508 850,501 910,512 965,537 1030,580 1100,622 1160,648 1240,662 1400,661 1568,656'],
  [B, '120,806 190,802 250,785 320,769 370,762 420,770 490,777 540,773 600,750 650,734 740,727 800,734 860,744 940,758 1000,766 1060,777 1100,768 1135,751 1180,758'],
  [C, '0,776 50,785 90,783 140,775 180,777 240,795 330,808 440,819 520,813 565,806 640,818 700,828 800,831 900,824 980,818 1045,835 1110,822 1180,830 1250,838 1340,825 1390,815'],
  [D, '0,768 55,778 95,768 140,783 175,803 210,775 250,758 300,773 330,780 385,777 430,790 480,775 550,766 605,805 650,768 705,788 760,778 815,770 850,785 878,807 915,773 945,780 1000,763 1060,787 1130,758 1170,768 1225,775 1285,803 1341,777'],
];

const place = (s, u, v) => [s.x + u / s.sx - ORG_X, s.y + v / s.sy - ORG_Y];
const parse = (s, text) => text.split(' ').map(p => place(s, ...p.split(',').map(Number)));

function spline(pts) {
  const closed = pts.length > 3 && pts[0][0] === pts[pts.length - 1][0] && pts[0][1] === pts[pts.length - 1][1];
  const n = pts.length, out = [];
  for (let i = 0; i < n - 1; i++) {
    const p0 = i ? pts[i - 1] : closed ? pts[n - 2] : pts[0];
    const p1 = pts[i], p2 = pts[i + 1];
    const p3 = i < n - 2 ? pts[i + 2] : closed ? pts[1] : p2;
    const steps = Math.max(2, Math.ceil(Math.hypot(p2[0] - p1[0], p2[1] - p1[1])));
    for (let k = 0; k <= steps; k++) {
      const t = k / steps, t2 = t * t, t3 = t2 * t;
      const f = a => 0.5 * (2 * p1[a] + (p2[a] - p0[a]) * t + (2 * p0[a] - 5 * p1[a] + 4 * p2[a] - p3[a]) * t2 + (3 * p1[a] - p0[a] - 3 * p2[a] + p3[a]) * t3);
      out.push([f(0), f(1)]);
    }
  }
  return out;
}

const GW = BASE_W / 2, GH = BASE_H / 2;
const fixed = new Float32Array(GW * GH).fill(NaN);

function plotCurve(pts, level) {
  for (const [x, y] of spline(pts)) {
    const i = Math.floor(x / 2), j = Math.floor(y / 2);
    if (i >= 0 && j >= 0 && i < GW && j < GH) fixed[j * GW + i] = level;
  }
}
lines.forEach(([s, level, text]) => plotCurve(parse(s, text), level));
columns.forEach(([s, text]) => {
  const rows = text.split('|').map(r => r.split(' '));
  for (let k = 1; k < rows[0].length; k++) {
    const pts = rows.filter(r => r[k] !== '-').map(r => place(s, +r[0], +r[k]));
    if (pts.length > 1) plotCurve(pts, 40 + 5 * k);
  }
});
for (let i = 0; i < GW; i++) { fixed[i] = 39; fixed[(GH - 1) * GW + i] = 40; }

// Fill the space between the curves, from coarse to fine.
function solve(con, w, h) {
  let f;
  if (w > 80) {
    const cw = Math.ceil(w / 2), ch = Math.ceil(h / 2), cc = new Float32Array(cw * ch).fill(NaN);
    for (let j = 0; j < ch; j++) for (let i = 0; i < cw; i++) {
      let s = 0, n = 0;
      for (let b = 0; b < 2; b++) for (let a = 0; a < 2; a++) {
        const x = 2 * i + a, y = 2 * j + b;
        if (x < w && y < h && con[y * w + x] === con[y * w + x]) { s += con[y * w + x]; n++; }
      }
      if (n) cc[j * cw + i] = s / n;
    }
    const c = solve(cc, cw, ch);
    f = new Float32Array(w * h);
    for (let y = 0; y < h; y++) for (let x = 0; x < w; x++) f[y * w + x] = c[(y >> 1) * cw + (x >> 1)];
  } else f = new Float32Array(w * h).fill(40);
  for (let i = 0; i < w * h; i++) if (con[i] === con[i]) f[i] = con[i];
  for (let it = 0; it < 60; it++) {
    const om = it < 45 ? 1.6 : 1;
    for (let y = 0; y < h; y++) for (let x = 0; x < w; x++) {
      const i = y * w + x;
      if (con[i] === con[i]) continue;
      const m = (f[x ? i - 1 : i + 1] + f[x < w - 1 ? i + 1 : i - 1] + f[y ? i - w : i + w] + f[y < h - 1 ? i + w : i - w]) / 4;
      f[i] += om * (m - f[i]);
    }
  }
  return f;
}

function blur(src, r) {
  const pass = (a, w, h, sx, sy) => {
    const o = new Float32Array(a.length);
    for (let y = 0; y < h; y++) {
      for (let x = 0; x < w; x++) {
        let s = 0;
        for (let k = -r; k <= r; k++) s += a[Math.min(w - 1, Math.max(0, x + k)) * sx + y * sy];
        o[x * sx + y * sy] = s / (2 * r + 1);
      }
    }
    return o;
  };
  return pass(pass(src, GW, GH, 1, GW), GH, GW, GW, 1);
}

const field = blur(solve(fixed, GW, GH), 1);
const relief = blur(blur(field, 4), 3);

const bands = [[43, 31, 0, 127], [47, 0, 0, 166], [51, 0, 76, 150], [55, 0, 155, 155], [59, 0, 192, 126], [63, 0, 180, 30],
  [67, 64, 190, 0], [71, 160, 200, 0], [75, 242, 220, 0], [79, 250, 112, 0], [999, 255, 0, 0]];
const FLOOR = [45, 0, 80];

function draw() {
  const w = canvas.width = canvas.clientWidth || BASE_W, h = canvas.height = canvas.clientHeight || BASE_H;
  const kx = GW / w, ky = GH / h;
  const at = (f, x, y) => {
    const gx = Math.min(GW - 1.001, Math.max(0, x * kx - 0.5)), gy = Math.min(GH - 1.001, Math.max(0, y * ky - 0.5));
    const i = gx | 0, j = gy | 0, a = gx - i, b = gy - j, p = j * GW + i;
    return (f[p] * (1 - a) + f[p + 1] * a) * (1 - b) + (f[p + GW] * (1 - a) + f[p + GW + 1] * a) * b;
  };
  const ctx = canvas.getContext('2d'), img = ctx.createImageData(w, h), px = img.data;
  const lev = new Float32Array(w * h);
  for (let y = 0; y < h; y++) for (let x = 0; x < w; x++) lev[y * w + x] = at(field, x, y);
  for (let y = 0; y < h; y++) for (let x = 0; x < w; x++) {
    const i = y * w + x, v = lev[i];
    let c = FLOOR;
    if (v > 41) {
      let k = 0;
      while (v >= bands[k][0]) k++;
      const b = bands[k];
      const slopeX = (at(relief, x + 2, y) - at(relief, x - 2, y)) / 4, slopeY = (at(relief, x, y + 2) - at(relief, x, y - 2)) / 4;
      const g = 9, t = (slopeY * g - slopeX * g * 1.1) / Math.sqrt(2 + g * g * (slopeX * slopeX + slopeY * slopeY));
      let s = Math.min(1, Math.max(0, (t + 0.1) / 0.75));
      const dark = 0.56 + 0.3 * Math.pow(Math.max(0, 75 - v) / 30, 1.5);
      s = dark + (1 - dark) * s * s * (3 - 2 * s);
      const tint = Math.max(0, t - 0.75) * 0.4;
      c = [1, 2, 3].map(q => b[q] * s + (235 - b[q] * s) * tint);
      if (v < 42.4) { const m = (v - 41) / 1.4; c = c.map((q, n) => q * m + FLOOR[n] * (1 - m)); }
      const right = x < w - 1 ? lev[i + 1] : v, down = y < h - 1 ? lev[i + w] : v, q = Math.floor(v / 5);
      if ((v > 43 || right > 43) && (Math.floor(right / 5) !== q || Math.floor(down / 5) !== q)) c = [8, 8, 12];
    }
    px[i * 4] = c[0]; px[i * 4 + 1] = c[1]; px[i * 4 + 2] = c[2]; px[i * 4 + 3] = 255;
  }
  ctx.putImageData(img, 0, 0);

  const X = x => x * w / BASE_W, Y = y => y * h / BASE_H;
  const stroke = (x1, y1, x2, y2, color) => {
    ctx.strokeStyle = color; ctx.beginPath();
    ctx.moveTo(Math.floor(x1) + 0.5, Math.floor(y1) + 0.5); ctx.lineTo(Math.floor(x2) + 0.5, Math.floor(y2) + 0.5); ctx.stroke();
  };
  ctx.lineWidth = 1;
  const grid = 'rgba(84,76,84,.75)';
  for (const f of [30, 40, 50, 60, 70, 80, 90, 100, 200, 300, 400]) {
    const x = w * Math.log(f / 20) / Math.log(25);
    stroke(x, 0, x, h, grid);
  }
  for (let k = -4; k < 20; k++) { const y = Y(941.5 - k * 47.25); stroke(0, y, w, y, grid); }

  ctx.save();
  ctx.lineWidth = 2; ctx.strokeStyle = '#101010'; ctx.setLineDash([8, 3]);
  ctx.beginPath();
  let first = true;
  for (const [s, text] of peakTime) for (const [x, y] of spline(parse(s, text))) {
    if (first) ctx.moveTo(X(x), Y(y)); else ctx.lineTo(X(x), Y(y));
    first = false;
  }
  ctx.stroke();
  ctx.restore();

  const cx = w * Math.log(34.23 / 20) / Math.log(25);
  stroke(cx, 0, cx, h, '#d8d8d8');
  stroke(0, Y(662), w, Y(662), '#c0c0b8');
}
draw();
```
